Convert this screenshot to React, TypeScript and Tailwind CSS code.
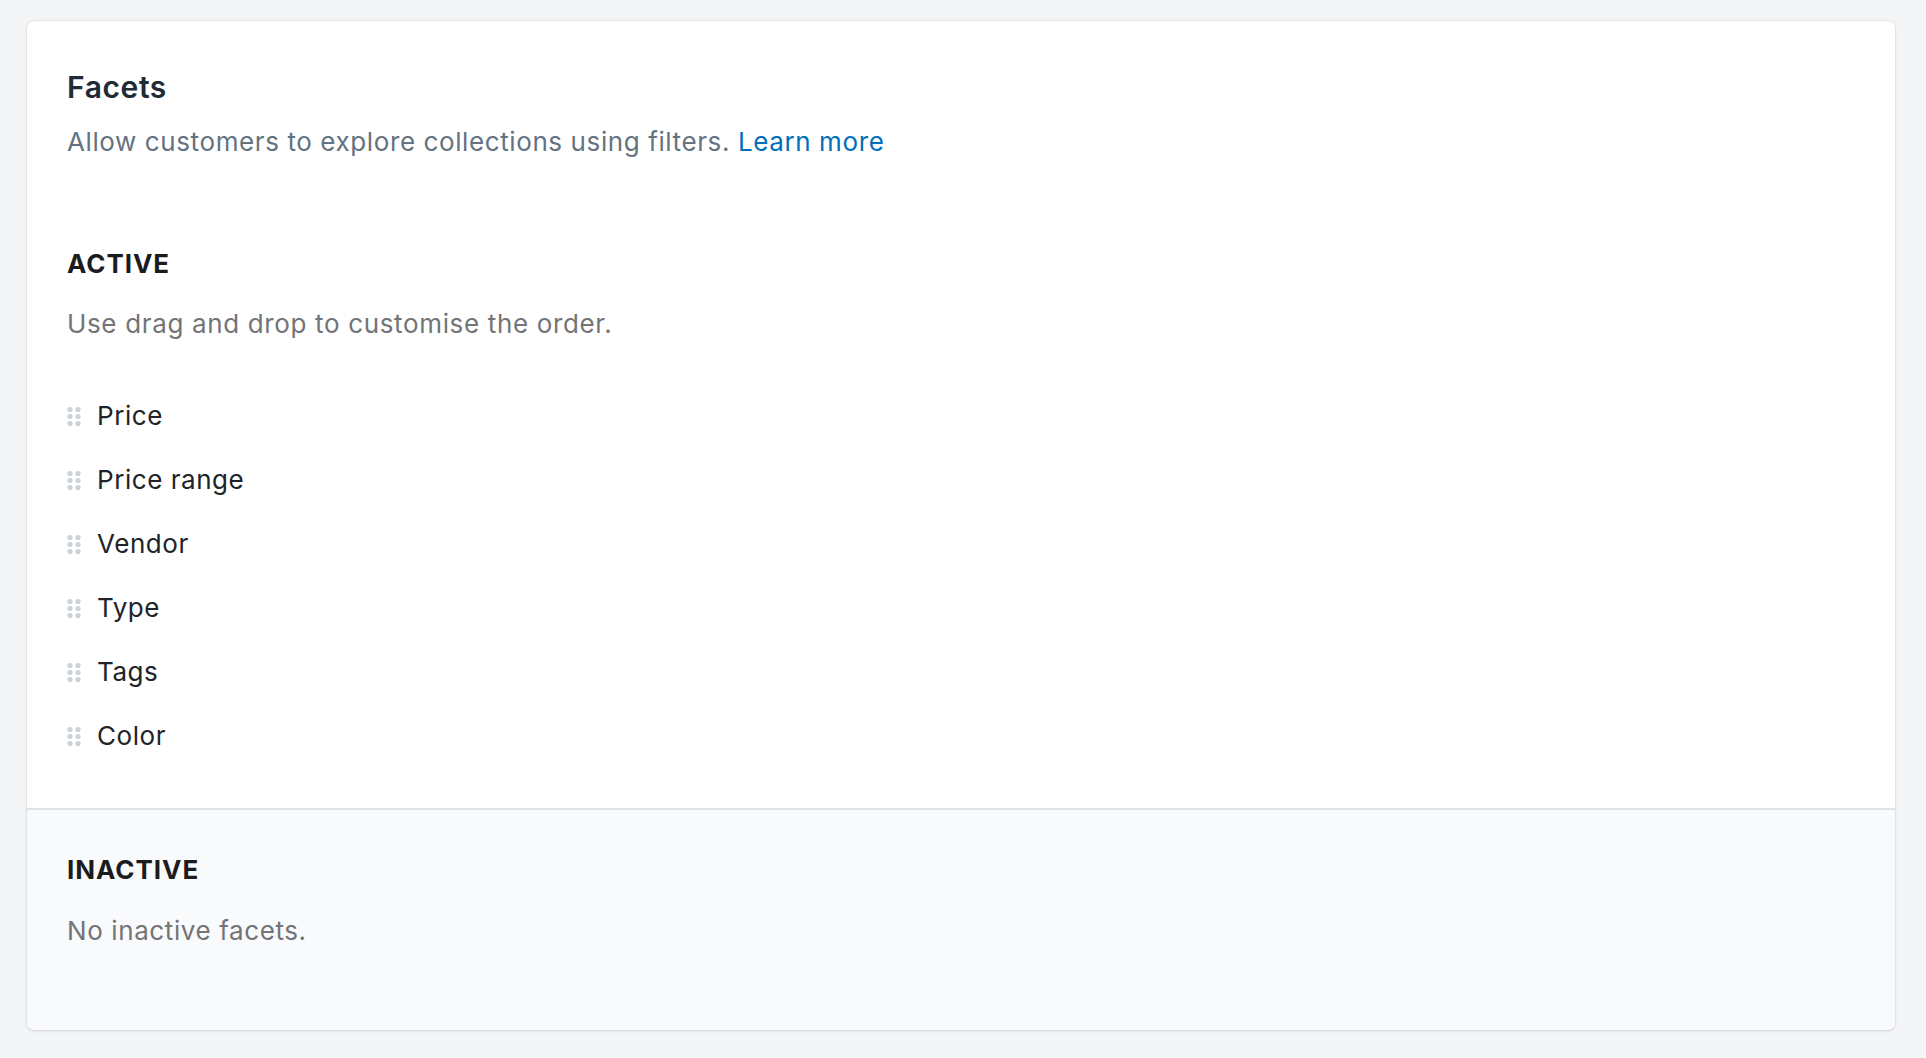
const facets = ["Price", "Price range", "Vendor", "Type", "Tags", "Color"];

const DragHandle = () => (
  <svg width="14" height="21" viewBox="0 0 14 21" className="shrink-0">
    {[3.5, 10.5, 17.5].map((cy) =>
      [3, 11].map((cx) => (
        <circle key={`${cx}-${cy}`} cx={cx} cy={cy} r="2.6" fill="#cdd2d8" />
      ))
    )}
  </svg>
);

export default function App() {
  return (
    <div className="min-h-screen bg-[#f4f5f7] pl-[27px] pr-[31px] pt-[21px] pb-[30px] font-['Inter',sans-serif]">
      <div className="rounded-[7px] bg-white shadow-[0_0_0_1px_rgba(63,63,68,0.05),0_1px_3px_0_rgba(63,63,68,0.15)] overflow-hidden">
        {/* Active section */}
        <div className="px-[40px] pt-[48px] pb-[40px]">
          <h2 className="text-[30px] leading-[36px] font-semibold text-[#212b36] tracking-[0.6px]">
            Facets
          </h2>
          <p className="mt-[19px] text-[26px] leading-[36px] text-[#637381] tracking-[0.6px]">
            Allow customers to explore collections using filters.{" "}
            <a href="#" className="text-[#006fbb]">
              Learn more
            </a>
          </p>

          <h3 className="mt-[86px] text-[26px] leading-[36px] font-bold text-[#1c1c1e] tracking-[0.95px]">
            ACTIVE
          </h3>
          <p className="mt-[24px] text-[26px] leading-[36px] text-[#727478] tracking-[0.65px]">
            Use drag and drop to customise the order.
          </p>

          <ul className="mt-[42px]">
            {facets.map((f) => (
              <li key={f} className="flex h-[64px] items-center gap-[16px]">
                <DragHandle />
                <span className="text-[26px] leading-[36px] text-[#202328] tracking-[0.55px]">{f}</span>
              </li>
            ))}
          </ul>
        </div>

        {/* Inactive section */}
        <div className="border-t-[2px] border-[#dfe3e8] bg-[#f9fafb] px-[40px] pt-[42px] pb-[81px]">
          <h3 className="text-[26px] leading-[36px] font-bold text-[#1c1c1e] tracking-[0.95px]">
            INACTIVE
          </h3>
          <p className="mt-[25px] text-[26px] leading-[36px] text-[#727478] tracking-[0.6px]">
            No inactive facets.
          </p>
        </div>
      </div>
    </div>
  );
}
